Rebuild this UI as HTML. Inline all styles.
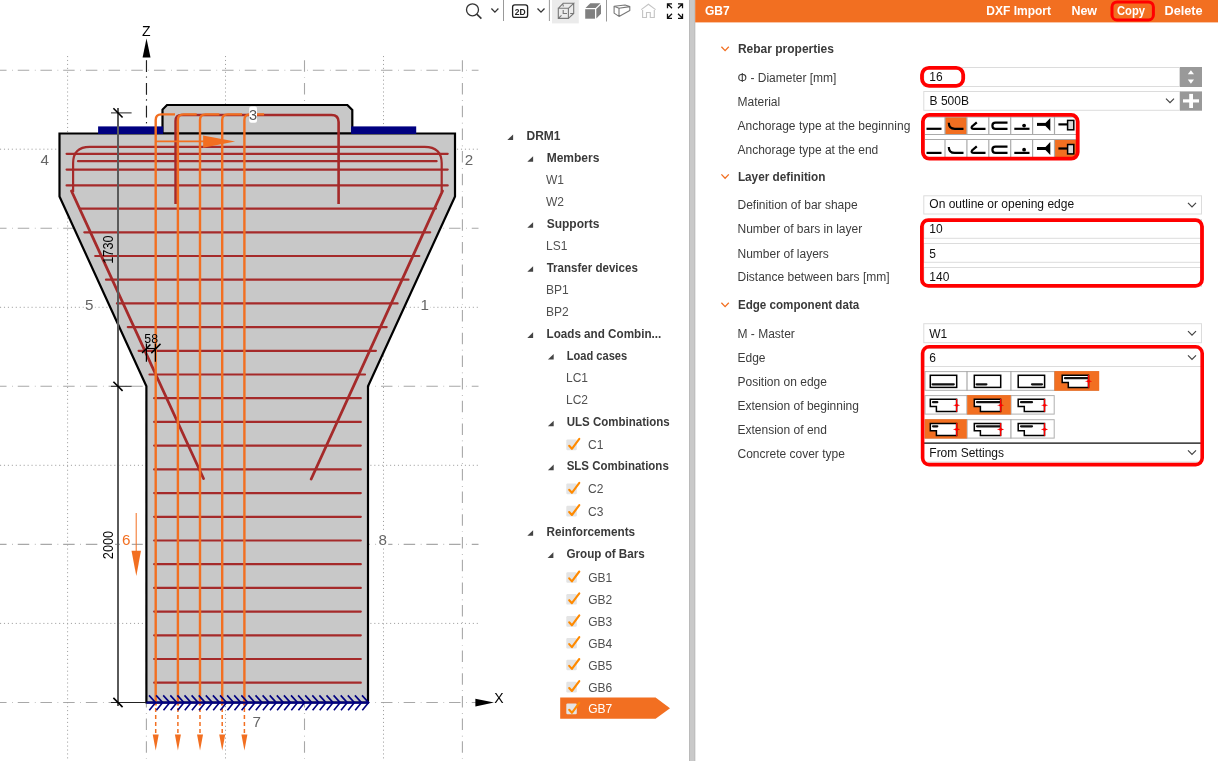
<!DOCTYPE html><html><head><meta charset="utf-8"><style>html,body{margin:0;padding:0;background:#fff;}body{width:1218px;height:761px;overflow:hidden;position:relative;}svg text{font-family:"Liberation Sans",sans-serif;}</style></head><body>
<svg width="1218" height="761" viewBox="0 0 1218 761" style="position:absolute;left:0;top:0;will-change:transform">
<rect x="0" y="0" width="1218" height="761" fill="#fff"/>
<line x1="0" y1="70.2" x2="478.5" y2="70.2" stroke="#a8a8a8" stroke-width="1.1" stroke-dasharray="11.5,5.6,0.7,4.9" stroke-dashoffset="4.95"/><line x1="0" y1="228.3" x2="478.5" y2="228.3" stroke="#a8a8a8" stroke-width="1.1" stroke-dasharray="11.5,5.6,0.7,4.9" stroke-dashoffset="4.95"/><line x1="0" y1="386.3" x2="478.5" y2="386.3" stroke="#a8a8a8" stroke-width="1.1" stroke-dasharray="11.5,5.6,0.7,4.9" stroke-dashoffset="4.95"/><line x1="0" y1="544.4" x2="478.5" y2="544.4" stroke="#a8a8a8" stroke-width="1.1" stroke-dasharray="11.5,5.6,0.7,4.9" stroke-dashoffset="4.95"/><line x1="0" y1="702.5" x2="478.5" y2="702.5" stroke="#a8a8a8" stroke-width="1.1" stroke-dasharray="11.5,5.6,0.7,4.9" stroke-dashoffset="4.95"/><line x1="0" y1="149.2" x2="478.5" y2="149.2" stroke="#a0a0a0" stroke-width="1" stroke-dasharray="1.1,2.84"/><line x1="0" y1="307.3" x2="478.5" y2="307.3" stroke="#a0a0a0" stroke-width="1" stroke-dasharray="1.1,2.84"/><line x1="0" y1="465.3" x2="478.5" y2="465.3" stroke="#a0a0a0" stroke-width="1" stroke-dasharray="1.1,2.84"/><line x1="0" y1="623.4" x2="478.5" y2="623.4" stroke="#a0a0a0" stroke-width="1" stroke-dasharray="1.1,2.84"/><line x1="146.4" y1="56" x2="146.4" y2="761" stroke="#a8a8a8" stroke-width="1.1" stroke-dasharray="11.5,5.6,0.7,4.9" stroke-dashoffset="18.4"/><line x1="304.5" y1="56" x2="304.5" y2="761" stroke="#a8a8a8" stroke-width="1.1" stroke-dasharray="11.5,5.6,0.7,4.9" stroke-dashoffset="18.4"/><line x1="462.4" y1="56" x2="462.4" y2="761" stroke="#a8a8a8" stroke-width="1.1" stroke-dasharray="11.5,5.6,0.7,4.9" stroke-dashoffset="18.4"/><line x1="67.6" y1="56" x2="67.6" y2="761" stroke="#a0a0a0" stroke-width="1" stroke-dasharray="1.1,2.84"/><line x1="225.5" y1="56" x2="225.5" y2="761" stroke="#a0a0a0" stroke-width="1" stroke-dasharray="1.1,2.84"/><line x1="383.5" y1="56" x2="383.5" y2="761" stroke="#a0a0a0" stroke-width="1" stroke-dasharray="1.1,2.84"/>
<polygon points="162.5,133.5 162.5,109.6 167,105 347.4,105 352.3,110 352.3,133.5" fill="#c8c8c8" stroke="#000" stroke-width="2.2" stroke-linejoin="miter"/>
<polygon points="59.5,133.5 455,133.5 455,196.5 368,386.3 368,702.5 146.4,702.5 146.4,386.3 59.5,196.5" fill="#c8c8c8" stroke="#000" stroke-width="2.2" stroke-linejoin="miter"/>
<rect x="98.1" y="126.4" width="65" height="7.6" fill="#000080"/>
<rect x="351.1" y="126.4" width="65.1" height="7.6" fill="#000080"/>
<line x1="66.6" y1="153.8" x2="447.7" y2="153.8" stroke="#a52a2a" stroke-width="2.2" stroke-linecap="round"/><line x1="78.0" y1="161.2" x2="436.6" y2="161.2" stroke="#a52a2a" stroke-width="2.2" stroke-linecap="round"/><line x1="66.6" y1="169.6" x2="447.7" y2="169.6" stroke="#a52a2a" stroke-width="2.2" stroke-linecap="round"/><line x1="66.6" y1="185.4" x2="447.7" y2="185.4" stroke="#a52a2a" stroke-width="2.2" stroke-linecap="round"/><line x1="80.8" y1="208.6" x2="436.0" y2="208.6" stroke="#a52a2a" stroke-width="2.2" stroke-linecap="round"/><line x1="84.3" y1="232.3" x2="430.2" y2="232.3" stroke="#a52a2a" stroke-width="2.2" stroke-linecap="round"/><line x1="95.2" y1="256.0" x2="419.3" y2="256.0" stroke="#a52a2a" stroke-width="2.2" stroke-linecap="round"/><line x1="106.0" y1="279.7" x2="408.5" y2="279.7" stroke="#a52a2a" stroke-width="2.2" stroke-linecap="round"/><line x1="116.9" y1="303.4" x2="397.6" y2="303.4" stroke="#a52a2a" stroke-width="2.2" stroke-linecap="round"/><line x1="127.8" y1="327.1" x2="386.7" y2="327.1" stroke="#a52a2a" stroke-width="2.2" stroke-linecap="round"/><line x1="138.6" y1="350.8" x2="375.9" y2="350.8" stroke="#a52a2a" stroke-width="2.2" stroke-linecap="round"/><line x1="149.5" y1="374.5" x2="365.0" y2="374.5" stroke="#a52a2a" stroke-width="2.2" stroke-linecap="round"/><line x1="154.2" y1="398.2" x2="360.8" y2="398.2" stroke="#a52a2a" stroke-width="2.2" stroke-linecap="round"/><line x1="154.2" y1="421.9" x2="360.8" y2="421.9" stroke="#a52a2a" stroke-width="2.2" stroke-linecap="round"/><line x1="154.2" y1="445.6" x2="360.8" y2="445.6" stroke="#a52a2a" stroke-width="2.2" stroke-linecap="round"/><line x1="154.2" y1="469.4" x2="360.8" y2="469.4" stroke="#a52a2a" stroke-width="2.2" stroke-linecap="round"/><line x1="154.2" y1="493.1" x2="360.8" y2="493.1" stroke="#a52a2a" stroke-width="2.2" stroke-linecap="round"/><line x1="154.2" y1="516.8" x2="360.8" y2="516.8" stroke="#a52a2a" stroke-width="2.2" stroke-linecap="round"/><line x1="154.2" y1="540.5" x2="360.8" y2="540.5" stroke="#a52a2a" stroke-width="2.2" stroke-linecap="round"/><line x1="154.2" y1="564.2" x2="360.8" y2="564.2" stroke="#a52a2a" stroke-width="2.2" stroke-linecap="round"/><line x1="154.2" y1="587.9" x2="360.8" y2="587.9" stroke="#a52a2a" stroke-width="2.2" stroke-linecap="round"/><line x1="154.2" y1="611.6" x2="360.8" y2="611.6" stroke="#a52a2a" stroke-width="2.2" stroke-linecap="round"/><line x1="154.2" y1="635.3" x2="360.8" y2="635.3" stroke="#a52a2a" stroke-width="2.2" stroke-linecap="round"/><line x1="154.2" y1="659.0" x2="360.8" y2="659.0" stroke="#a52a2a" stroke-width="2.2" stroke-linecap="round"/><line x1="154.2" y1="682.7" x2="360.8" y2="682.7" stroke="#a52a2a" stroke-width="2.2" stroke-linecap="round"/><path d="M 73.1 192 L 73.1 163.3 Q 73.1 146.8 89.7 146.8 L 424.5 146.8 Q 441.7 146.8 441.7 163.3 L 441.7 192" fill="none" stroke="#a52a2a" stroke-width="2.2"/><line x1="71.5" y1="191.0" x2="203.5" y2="478.5" stroke="#a52a2a" stroke-width="2.8" stroke-linecap="round"/><line x1="442.5" y1="191.0" x2="311.2" y2="479.0" stroke="#a52a2a" stroke-width="2.8" stroke-linecap="round"/><path d="M 175.6 204 L 175.6 121 Q 175.6 115 181.6 115 L 331.5 115 Q 338.6 115 338.6 122 L 338.6 204" fill="none" stroke="#a52a2a" stroke-width="2.6"/>
<path d="M 155.7 705.5 L 155.7 120 Q 155.7 114.4 161.29999999999998 114.4 L 175 114.4" fill="none" stroke="#f26f21" stroke-width="2.4"/><line x1="155.7" y1="708" x2="155.7" y2="736" stroke="#f26f21" stroke-width="1.5" stroke-dasharray="4,3"/><polygon points="152.7,734.4 158.7,734.4 155.7,750.4" fill="#f26f21"/><path d="M 177.9 705.5 L 177.9 120 Q 177.9 114.4 183.5 114.4 L 196.7 114.4" fill="none" stroke="#f26f21" stroke-width="2.4"/><line x1="177.9" y1="708" x2="177.9" y2="736" stroke="#f26f21" stroke-width="1.5" stroke-dasharray="4,3"/><polygon points="174.9,734.4 180.9,734.4 177.9,750.4" fill="#f26f21"/><path d="M 200.0 705.5 L 200.0 120 Q 200.0 114.4 205.6 114.4 L 219.4 114.4" fill="none" stroke="#f26f21" stroke-width="2.4"/><line x1="200.0" y1="708" x2="200.0" y2="736" stroke="#f26f21" stroke-width="1.5" stroke-dasharray="4,3"/><polygon points="197.0,734.4 203.0,734.4 200.0,750.4" fill="#f26f21"/><path d="M 222.2 705.5 L 222.2 120 Q 222.2 114.4 227.79999999999998 114.4 L 242 114.4" fill="none" stroke="#f26f21" stroke-width="2.4"/><line x1="222.2" y1="708" x2="222.2" y2="736" stroke="#f26f21" stroke-width="1.5" stroke-dasharray="4,3"/><polygon points="219.2,734.4 225.2,734.4 222.2,750.4" fill="#f26f21"/><path d="M 244.4 705.5 L 244.4 120 Q 244.4 114.4 250.0 114.4 L 264.1 114.4" fill="none" stroke="#f26f21" stroke-width="2.4"/><line x1="244.4" y1="708" x2="244.4" y2="736" stroke="#f26f21" stroke-width="1.5" stroke-dasharray="4,3"/><polygon points="241.4,734.4 247.4,734.4 244.4,750.4" fill="#f26f21"/><line x1="155.7" y1="141.4" x2="204" y2="141.4" stroke="#f26f21" stroke-width="1.6"/><polygon points="203.1,135.5 235.1,141.4 203.1,147.8" fill="#f26f21"/><line x1="136.2" y1="513" x2="136.2" y2="552" stroke="#f26f21" stroke-width="1"/><polygon points="131.5,550.7 141,550.7 136.3,576" fill="#f26f21"/>
<line x1="146.4" y1="702.6" x2="368.6" y2="702.6" stroke="#000080" stroke-width="2.2"/><path d="M 362.0 695.4 L 368.6 702.6 L 362.3 710.2" fill="none" stroke="#000080" stroke-width="1.6"/><path d="M 354.9 695.4 L 361.5 702.6 L 355.2 710.2" fill="none" stroke="#000080" stroke-width="1.6"/><path d="M 347.8 695.4 L 354.4 702.6 L 348.1 710.2" fill="none" stroke="#000080" stroke-width="1.6"/><path d="M 340.7 695.4 L 347.3 702.6 L 341.0 710.2" fill="none" stroke="#000080" stroke-width="1.6"/><path d="M 333.6 695.4 L 340.2 702.6 L 333.9 710.2" fill="none" stroke="#000080" stroke-width="1.6"/><path d="M 326.5 695.4 L 333.1 702.6 L 326.8 710.2" fill="none" stroke="#000080" stroke-width="1.6"/><path d="M 319.4 695.4 L 326.0 702.6 L 319.7 710.2" fill="none" stroke="#000080" stroke-width="1.6"/><path d="M 312.3 695.4 L 318.9 702.6 L 312.6 710.2" fill="none" stroke="#000080" stroke-width="1.6"/><path d="M 305.2 695.4 L 311.8 702.6 L 305.5 710.2" fill="none" stroke="#000080" stroke-width="1.6"/><path d="M 298.1 695.4 L 304.7 702.6 L 298.4 710.2" fill="none" stroke="#000080" stroke-width="1.6"/><path d="M 291.0 695.4 L 297.6 702.6 L 291.3 710.2" fill="none" stroke="#000080" stroke-width="1.6"/><path d="M 283.9 695.4 L 290.5 702.6 L 284.2 710.2" fill="none" stroke="#000080" stroke-width="1.6"/><path d="M 276.8 695.4 L 283.4 702.6 L 277.1 710.2" fill="none" stroke="#000080" stroke-width="1.6"/><path d="M 269.7 695.4 L 276.3 702.6 L 270.0 710.2" fill="none" stroke="#000080" stroke-width="1.6"/><path d="M 262.6 695.4 L 269.2 702.6 L 262.9 710.2" fill="none" stroke="#000080" stroke-width="1.6"/><path d="M 255.5 695.4 L 262.1 702.6 L 255.8 710.2" fill="none" stroke="#000080" stroke-width="1.6"/><path d="M 248.4 695.4 L 255.0 702.6 L 248.7 710.2" fill="none" stroke="#000080" stroke-width="1.6"/><path d="M 241.3 695.4 L 247.9 702.6 L 241.6 710.2" fill="none" stroke="#000080" stroke-width="1.6"/><path d="M 234.2 695.4 L 240.8 702.6 L 234.5 710.2" fill="none" stroke="#000080" stroke-width="1.6"/><path d="M 227.1 695.4 L 233.7 702.6 L 227.4 710.2" fill="none" stroke="#000080" stroke-width="1.6"/><path d="M 220.0 695.4 L 226.6 702.6 L 220.3 710.2" fill="none" stroke="#000080" stroke-width="1.6"/><path d="M 212.9 695.4 L 219.5 702.6 L 213.2 710.2" fill="none" stroke="#000080" stroke-width="1.6"/><path d="M 205.8 695.4 L 212.4 702.6 L 206.1 710.2" fill="none" stroke="#000080" stroke-width="1.6"/><path d="M 198.7 695.4 L 205.3 702.6 L 199.0 710.2" fill="none" stroke="#000080" stroke-width="1.6"/><path d="M 191.6 695.4 L 198.2 702.6 L 191.9 710.2" fill="none" stroke="#000080" stroke-width="1.6"/><path d="M 184.5 695.4 L 191.1 702.6 L 184.8 710.2" fill="none" stroke="#000080" stroke-width="1.6"/><path d="M 177.4 695.4 L 184.0 702.6 L 177.7 710.2" fill="none" stroke="#000080" stroke-width="1.6"/><path d="M 170.3 695.4 L 176.9 702.6 L 170.6 710.2" fill="none" stroke="#000080" stroke-width="1.6"/><path d="M 163.2 695.4 L 169.8 702.6 L 163.5 710.2" fill="none" stroke="#000080" stroke-width="1.6"/><path d="M 156.1 695.4 L 162.7 702.6 L 156.4 710.2" fill="none" stroke="#000080" stroke-width="1.6"/><path d="M 149.0 695.4 L 155.6 702.6 L 149.3 710.2" fill="none" stroke="#000080" stroke-width="1.6"/>
<line x1="146.5" y1="60.2" x2="146.5" y2="126" stroke="#222" stroke-width="1.1" stroke-dasharray="11.8,4.4,1.2,5.4"/><polygon points="142.6,57.6 150.5,57.6 146.5,38.5" fill="#000"/><text x="146.3" y="36" font-size="14" text-anchor="middle" fill="#000">Z</text><polygon points="475.4,698.8 475.4,706.4 494,702.6" fill="#000"/><text x="494.2" y="702.8" font-size="14" fill="#000">X</text><line x1="118" y1="108" x2="118" y2="706" stroke="#5a5a5a" stroke-width="2"/><line x1="111" y1="112.9" x2="131.6" y2="112.9" stroke="#222" stroke-width="1"/><line x1="113.4" y1="108.30000000000001" x2="122.6" y2="117.5" stroke="#000" stroke-width="1.6"/><line x1="111" y1="386.3" x2="131.6" y2="386.3" stroke="#222" stroke-width="1"/><line x1="113.4" y1="381.7" x2="122.6" y2="390.90000000000003" stroke="#000" stroke-width="1.6"/><line x1="111" y1="702.5" x2="131.6" y2="702.5" stroke="#222" stroke-width="1"/><line x1="113.4" y1="697.9" x2="122.6" y2="707.1" stroke="#000" stroke-width="1.6"/><line x1="131" y1="702.5" x2="146" y2="702.5" stroke="#222" stroke-width="1"/><text transform="translate(113.3,249.6) rotate(-90)" font-size="14.6" text-anchor="middle" textLength="28.4" lengthAdjust="spacingAndGlyphs" fill="#000">1730</text><rect x="101.5" y="529.5" width="13.5" height="31" fill="#fff"/><text transform="translate(113.4,545) rotate(-90)" font-size="14.6" text-anchor="middle" textLength="28.4" lengthAdjust="spacingAndGlyphs" fill="#000">2000</text><text x="151.2" y="342.8" font-size="12.3" text-anchor="middle" fill="#000">58</text><line x1="146.3" y1="348.5" x2="155.4" y2="348.5" stroke="#000" stroke-width="1.1"/><line x1="146.4" y1="343.6" x2="146.4" y2="361.7" stroke="#000" stroke-width="1.2"/><line x1="155.4" y1="343.6" x2="155.4" y2="361.7" stroke="#000" stroke-width="1.2"/><line x1="142.1" y1="353.1" x2="150.4" y2="344.5" stroke="#000" stroke-width="1.5"/><line x1="151.3" y1="353.1" x2="160.5" y2="343.9" stroke="#000" stroke-width="1.5"/><rect x="39.3" y="151.7" width="11" height="15" fill="#fff"/><text x="44.8" y="164.7" font-size="15.2" text-anchor="middle" fill="#666">4</text><rect x="463.5" y="151.7" width="11" height="15" fill="#fff"/><text x="469" y="164.7" font-size="15.2" text-anchor="middle" fill="#666">2</text><rect x="83.8" y="297" width="11" height="15" fill="#fff"/><text x="89.3" y="310" font-size="15.2" text-anchor="middle" fill="#666">5</text><rect x="419.2" y="297" width="11" height="15" fill="#fff"/><text x="424.7" y="310" font-size="15.2" text-anchor="middle" fill="#666">1</text><rect x="377.2" y="532" width="11" height="15" fill="#fff"/><text x="382.7" y="545" font-size="15.2" text-anchor="middle" fill="#666">8</text><rect x="251.3" y="713.7" width="11" height="15" fill="#fff"/><text x="256.8" y="726.7" font-size="15.2" text-anchor="middle" fill="#666">7</text><rect x="120.7" y="532" width="11" height="15" fill="#fff"/><text x="126.2" y="545" font-size="15.2" text-anchor="middle" fill="#f26f21">6</text><rect x="249.2" y="106.4" width="7.8" height="16.3" rx="2" fill="#fff"/><text x="253.1" y="119.8" font-size="14.5" text-anchor="middle" fill="#555">3</text>
<polygon points="560.2,697.6 655.6,697.6 670,708.2 655.6,718.7 560.2,718.7" fill="#f26f21"/><polygon points="513.1,134.4 513.1,140.0 507.3,140.0" fill="#444"/><text x="526.5" y="140" font-size="12" font-weight="bold" fill="#3a3a3a">DRM1</text><polygon points="533.1,156.2 533.1,161.8 527.3,161.8" fill="#444"/><text x="546.7" y="161.8" font-size="12" font-weight="bold" fill="#3a3a3a">Members</text><text x="546" y="183.8" font-size="12" fill="#505050">W1</text><text x="546" y="205.8" font-size="12" fill="#505050">W2</text><polygon points="533.1,222.2 533.1,227.8 527.3,227.8" fill="#444"/><text x="546.7" y="227.8" font-size="12" font-weight="bold" fill="#3a3a3a">Supports</text><text x="546" y="249.8" font-size="12" fill="#505050">LS1</text><polygon points="533.1,266.2 533.1,271.8 527.3,271.8" fill="#444"/><text x="546.7" y="271.8" font-size="12" font-weight="bold" textLength="91.12" lengthAdjust="spacingAndGlyphs" fill="#3a3a3a">Transfer devices</text><text x="546" y="293.8" font-size="12" fill="#505050">BP1</text><text x="546" y="315.8" font-size="12" fill="#505050">BP2</text><polygon points="533.1,332.3 533.1,337.9 527.3,337.9" fill="#444"/><text x="546.5" y="337.9" font-size="12" font-weight="bold" textLength="114.82" lengthAdjust="spacingAndGlyphs" fill="#3a3a3a">Loads and Combin...</text><polygon points="553.7,354.0 553.7,359.6 547.9,359.6" fill="#444"/><text x="566.7" y="359.6" font-size="12" font-weight="bold" textLength="60.46" lengthAdjust="spacingAndGlyphs" fill="#3a3a3a">Load cases</text><text x="566" y="382" font-size="12" fill="#505050">LC1</text><text x="566" y="403.8" font-size="12" fill="#505050">LC2</text><polygon points="553.7,420.7 553.7,426.3 547.9,426.3" fill="#444"/><text x="566.7" y="426.3" font-size="12" font-weight="bold" textLength="103.04" lengthAdjust="spacingAndGlyphs" fill="#3a3a3a">ULS Combinations</text><rect x="566.3" y="439.6" width="10.5" height="10.6" rx="1.2" fill="#e4e4e4"/><path d="M 569.2 445.8 L 571.9 448.8 L 579.3 438.9" fill="none" stroke="#ff8a00" stroke-width="2.1" stroke-linecap="round" stroke-linejoin="round"/><text x="588" y="449.4" font-size="12" fill="#505050">C1</text><polygon points="553.7,464.6 553.7,470.2 547.9,470.2" fill="#444"/><text x="566.7" y="470.2" font-size="12" font-weight="bold" textLength="102.08" lengthAdjust="spacingAndGlyphs" fill="#3a3a3a">SLS Combinations</text><rect x="566.3" y="483.6" width="10.5" height="10.6" rx="1.2" fill="#e4e4e4"/><path d="M 569.2 489.8 L 571.9 492.8 L 579.3 482.9" fill="none" stroke="#ff8a00" stroke-width="2.1" stroke-linecap="round" stroke-linejoin="round"/><text x="588" y="493.4" font-size="12" fill="#505050">C2</text><rect x="566.3" y="505.8" width="10.5" height="10.6" rx="1.2" fill="#e4e4e4"/><path d="M 569.2 512.0 L 571.9 515.0 L 579.3 505.1" fill="none" stroke="#ff8a00" stroke-width="2.1" stroke-linecap="round" stroke-linejoin="round"/><text x="588" y="515.6" font-size="12" fill="#505050">C3</text><polygon points="533.1,530.2 533.1,535.8 527.3,535.8" fill="#444"/><text x="546.5" y="535.8" font-size="12" font-weight="bold" textLength="88.61" lengthAdjust="spacingAndGlyphs" fill="#3a3a3a">Reinforcements</text><polygon points="553.4,552.3 553.4,557.9 547.6,557.9" fill="#444"/><text x="566.5" y="557.9" font-size="12" font-weight="bold" textLength="78.25" lengthAdjust="spacingAndGlyphs" fill="#3a3a3a">Group of Bars</text><rect x="566.3" y="572.2" width="10.5" height="10.6" rx="1.2" fill="#e4e4e4"/><path d="M 569.2 578.4 L 571.9 581.4 L 579.3 571.5" fill="none" stroke="#ff8a00" stroke-width="2.1" stroke-linecap="round" stroke-linejoin="round"/><text x="588.2" y="582" font-size="12" fill="#505050">GB1</text><rect x="566.3" y="594.0" width="10.5" height="10.6" rx="1.2" fill="#e4e4e4"/><path d="M 569.2 600.2 L 571.9 603.2 L 579.3 593.3" fill="none" stroke="#ff8a00" stroke-width="2.1" stroke-linecap="round" stroke-linejoin="round"/><text x="588.2" y="603.8" font-size="12" fill="#505050">GB2</text><rect x="566.3" y="616.1" width="10.5" height="10.6" rx="1.2" fill="#e4e4e4"/><path d="M 569.2 622.3 L 571.9 625.3 L 579.3 615.4" fill="none" stroke="#ff8a00" stroke-width="2.1" stroke-linecap="round" stroke-linejoin="round"/><text x="588.2" y="625.9" font-size="12" fill="#505050">GB3</text><rect x="566.3" y="637.9" width="10.5" height="10.6" rx="1.2" fill="#e4e4e4"/><path d="M 569.2 644.1 L 571.9 647.1 L 579.3 637.2" fill="none" stroke="#ff8a00" stroke-width="2.1" stroke-linecap="round" stroke-linejoin="round"/><text x="588.2" y="647.7" font-size="12" fill="#505050">GB4</text><rect x="566.3" y="659.7" width="10.5" height="10.6" rx="1.2" fill="#e4e4e4"/><path d="M 569.2 665.9 L 571.9 668.9 L 579.3 659.0" fill="none" stroke="#ff8a00" stroke-width="2.1" stroke-linecap="round" stroke-linejoin="round"/><text x="588.2" y="669.5" font-size="12" fill="#505050">GB5</text><rect x="566.3" y="681.8" width="10.5" height="10.6" rx="1.2" fill="#e4e4e4"/><path d="M 569.2 688.0 L 571.9 691.0 L 579.3 681.1" fill="none" stroke="#ff8a00" stroke-width="2.1" stroke-linecap="round" stroke-linejoin="round"/><text x="588.2" y="691.6" font-size="12" fill="#505050">GB6</text><rect x="566.3" y="703.6" width="10.5" height="10.6" rx="1.2" fill="#e4e4e4"/><path d="M 569.2 709.8 L 571.9 712.8 L 579.3 702.9" fill="none" stroke="#ff8a00" stroke-width="2.1" stroke-linecap="round" stroke-linejoin="round"/><text x="588.2" y="713.4" font-size="12" fill="#fff">GB7</text>
<circle cx="472.5" cy="9.8" r="6" fill="none" stroke="#333" stroke-width="1.3"/><line x1="476.8" y1="14.2" x2="481.4" y2="18.6" stroke="#333" stroke-width="1.6"/><path d="M 491.4 8.5 L 494.9 12.1 L 498.4 8.5" fill="none" stroke="#333" stroke-width="1.3"/><line x1="503.5" y1="0" x2="503.5" y2="21" stroke="#999" stroke-width="1"/><rect x="512.6" y="4.9" width="15" height="12.5" rx="2.2" fill="none" stroke="#222" stroke-width="1.3"/><text x="520.1" y="14.6" font-size="8.5" font-weight="bold" text-anchor="middle" fill="#222">2D</text><path d="M 537.5 8.5 L 541.0 12.1 L 544.5 8.5" fill="none" stroke="#333" stroke-width="1.3"/><line x1="549.4" y1="0" x2="549.4" y2="21" stroke="#999" stroke-width="1"/><rect x="552" y="0" width="26.8" height="23.4" fill="#ebebeb"/><path d="M 558.3 8.3 L 568.4 8.3 L 568.4 18.4 L 558.3 18.4 Z M 558.3 8.3 L 563.2 3.3 L 573.7 3.3 L 568.4 8.3 M 573.7 3.3 L 573.7 13.5 L 568.4 18.4 M 558.3 18.4 L 561.5 15.3 M 563.2 4.5 L 563.2 6.5 M 563.2 10 L 563.2 13.5 L 567 13.5 M 570.2 13.5 L 573.7 13.5" fill="none" stroke="#777" stroke-width="1.1"/><path d="M 585.2 9.2 L 595 9.2 L 595 18.7 L 585.2 18.7 Z" fill="#808080"/><path d="M 585.5 8 L 590.3 3.3 L 600.5 3.3 L 595.6 8 Z" fill="#808080"/><path d="M 596.3 9 L 601 4.5 L 601 13.7 L 596.3 18.5 Z" fill="#808080"/><line x1="606.5" y1="0" x2="606.5" y2="21.5" stroke="#999" stroke-width="1"/><path d="M 614.1 6.3 L 625 5 L 629.8 6.6 L 629.8 10.5 L 619 16.4 L 614.1 13.1 Z M 614.1 6.3 L 619 8.2 L 629.8 6.6 M 619 8.2 L 619 16.4" fill="none" stroke="#777" stroke-width="1.1" stroke-linejoin="round"/><path d="M 641.2 9.6 L 648.4 4.3 L 655.6 9.6 M 642.6 10 L 642.6 17.5 L 646.5 17.5 L 646.5 12.5 L 650.3 12.5 L 650.3 17.5 L 654.3 17.5 L 654.3 10" fill="none" stroke="#c4c4c4" stroke-width="1.1"/><path d="M 672.0 3.8 L 667.5 3.8 L 667.5 8.3 M 667.5 3.8 L 672.0 8.3" fill="none" stroke="#111" stroke-width="1.3"/><path d="M 678.0 3.8 L 682.5 3.8 L 682.5 8.3 M 682.5 3.8 L 678.0 8.3" fill="none" stroke="#111" stroke-width="1.3"/><path d="M 672.0 18.3 L 667.5 18.3 L 667.5 13.8 M 667.5 18.3 L 672.0 13.8" fill="none" stroke="#111" stroke-width="1.3"/><path d="M 678.0 18.3 L 682.5 18.3 L 682.5 13.8 M 682.5 18.3 L 678.0 13.8" fill="none" stroke="#111" stroke-width="1.3"/>
<rect x="689.1" y="0" width="6.1" height="761" fill="#c9c9c9"/>
<rect x="689.1" y="0" width="0.8" height="761" fill="#b5b5b5"/><rect x="694.4" y="0" width="0.8" height="761" fill="#b8b8b8"/>
<rect x="695.2" y="0" width="523" height="22.4" fill="#f26f21"/><text x="705" y="15.2" font-size="12" font-weight="bold" textLength="24.67" lengthAdjust="spacingAndGlyphs" fill="#fff">GB7</text><text x="986.3" y="15.2" font-size="12" font-weight="bold" textLength="64.66" lengthAdjust="spacingAndGlyphs" fill="#fff">DXF Import</text><text x="1071.4" y="15.2" font-size="12" font-weight="bold" textLength="25.66" lengthAdjust="spacingAndGlyphs" fill="#fff">New</text><text x="1117" y="15.2" font-size="12" font-weight="bold" textLength="28.05" lengthAdjust="spacingAndGlyphs" fill="#fff">Copy</text><text x="1164.5" y="15.2" font-size="12" font-weight="bold" textLength="38.18" lengthAdjust="spacingAndGlyphs" fill="#fff">Delete</text><rect x="1112" y="1.9" width="41.4" height="18" rx="5" fill="none" stroke="#ff0000" stroke-width="3"/><path d="M 721.4 46.8 L 725.1 50.6 L 728.8 46.8" fill="none" stroke="#f26f21" stroke-width="1.3"/><text x="737.9" y="52.9" font-size="12" font-weight="bold" textLength="96.03" lengthAdjust="spacingAndGlyphs" fill="#3a3a3a">Rebar properties</text><text x="737.5" y="81.8" font-size="12" fill="#3c3c3c">&#934; - Diameter [mm]</text><text x="737.5" y="105.9" font-size="12" fill="#3c3c3c">Material</text><text x="737.5" y="129.9" font-size="12" fill="#3c3c3c">Anchorage type at the beginning</text><text x="737.5" y="153.8" font-size="12" fill="#3c3c3c">Anchorage type at the end</text><path d="M 721.4 174.4 L 725.1 178.2 L 728.8 174.4" fill="none" stroke="#f26f21" stroke-width="1.3"/><text x="737.9" y="180.5" font-size="12" font-weight="bold" textLength="87.56" lengthAdjust="spacingAndGlyphs" fill="#3a3a3a">Layer definition</text><text x="737.5" y="209.3" font-size="12" fill="#3c3c3c">Definition of bar shape</text><text x="737.5" y="233.3" font-size="12" fill="#3c3c3c">Number of bars in layer</text><text x="737.5" y="257.5" font-size="12" fill="#3c3c3c">Number of layers</text><text x="737.5" y="281.4" font-size="12" fill="#3c3c3c">Distance between bars [mm]</text><path d="M 721.4 302.8 L 725.1 306.6 L 728.8 302.8" fill="none" stroke="#f26f21" stroke-width="1.3"/><text x="737.9" y="308.9" font-size="12" font-weight="bold" textLength="121.33" lengthAdjust="spacingAndGlyphs" fill="#3a3a3a">Edge component data</text><text x="737.5" y="338" font-size="12" fill="#3c3c3c">M - Master</text><text x="737.5" y="362.1" font-size="12" fill="#3c3c3c">Edge</text><text x="737.5" y="386" font-size="12" fill="#3c3c3c">Position on edge</text><text x="737.5" y="410.2" font-size="12" fill="#3c3c3c">Extension of beginning</text><text x="737.5" y="434.1" font-size="12" fill="#3c3c3c">Extension of end</text><text x="737.5" y="458.3" font-size="12" fill="#3c3c3c">Concrete cover type</text><rect x="923.8" y="67.5" width="255.70000000000005" height="19" fill="#fff" stroke="#dcdcdc" stroke-width="1"/><text x="929.3" y="81.4" font-size="12" fill="#111">16</text><rect x="1180" y="67" width="22" height="20" fill="#999"/><polygon points="1187.8,74.3 1194,74.3 1190.9,70.2" fill="#fff"/><polygon points="1187.8,79.6 1194,79.6 1190.9,83.7" fill="#fff"/><rect x="922" y="67.8" width="41.2" height="18" rx="7" fill="none" stroke="#ff0000" stroke-width="3.8"/><rect x="923.8" y="91.5" width="256" height="18.8" fill="#fff" stroke="#dcdcdc" stroke-width="1"/><text x="929.6" y="104.7" font-size="12" fill="#111">B 500B</text><path d="M 1166 98.6 L 1170 102.6 L 1174 98.6" fill="none" stroke="#444" stroke-width="1.2"/><rect x="1180" y="91.4" width="22" height="19.3" fill="#999"/><rect x="1183" y="99.3" width="16" height="3.2" fill="#fff"/><rect x="1189.2" y="93.9" width="3.8" height="14.1" fill="#fff"/><rect x="925" y="116.5" width="151" height="18.5" fill="#fff"/><rect x="945.0" y="116.5" width="21.9" height="18.5" fill="#f26f21"/><line x1="925" y1="117.0" x2="1076" y2="117.0" stroke="#aaa" stroke-width="1"/><line x1="925" y1="134.5" x2="1076" y2="134.5" stroke="#aaa" stroke-width="1"/><line x1="945.0" y1="116.5" x2="945.0" y2="135" stroke="#aaa" stroke-width="1.2"/><line x1="966.9" y1="116.5" x2="966.9" y2="135" stroke="#aaa" stroke-width="1.2"/><line x1="988.8" y1="116.5" x2="988.8" y2="135" stroke="#aaa" stroke-width="1.2"/><line x1="1010.7" y1="116.5" x2="1010.7" y2="135" stroke="#aaa" stroke-width="1.2"/><line x1="1032.6" y1="116.5" x2="1032.6" y2="135" stroke="#aaa" stroke-width="1.2"/><line x1="1054.5" y1="116.5" x2="1054.5" y2="135" stroke="#aaa" stroke-width="1.2"/><line x1="926.5" y1="128.8" x2="941.5" y2="128.8" stroke="#000" stroke-width="2.2"/><path d="M 948.8 122.80000000000001 Q 948.8 128.8 954.8 128.8 L 963.5 128.8" fill="none" stroke="#000" stroke-width="2.2"/><path d="M 976.8 122.30000000000001 L 972 126.4 Q 970.6 128.8 974 128.8 L 985.5 128.8" fill="none" stroke="#000" stroke-width="2.2"/><path d="M 1007.5 122.60000000000001 L 995.5 122.60000000000001 Q 992.4 122.60000000000001 992.4 125.70000000000002 Q 992.4 128.8 995.5 128.8 L 1007.5 128.8" fill="none" stroke="#000" stroke-width="2.2"/><line x1="1014.3" y1="128.8" x2="1029.5" y2="128.8" stroke="#000" stroke-width="2.2"/><circle cx="1024.1" cy="125.60000000000001" r="1.9" fill="#000"/><line x1="1037" y1="124.4" x2="1047" y2="124.4" stroke="#000" stroke-width="3"/><polygon points="1045.5,122.9 1050.3,118.0 1050.3,131.0 1045.5,125.9" fill="#000"/><line x1="1058.4" y1="124.4" x2="1067.3" y2="124.4" stroke="#000" stroke-width="2.2"/><rect x="1067.6" y="120.4" width="6.2" height="9.4" fill="#d9d9d9" stroke="#000" stroke-width="1.5"/><rect x="925" y="139" width="151" height="19" fill="#fff"/><rect x="1054.5" y="139" width="22.0" height="19" fill="#f26f21"/><line x1="925" y1="139.5" x2="1076" y2="139.5" stroke="#aaa" stroke-width="1"/><line x1="925" y1="157.5" x2="1076" y2="157.5" stroke="#aaa" stroke-width="1"/><line x1="945.0" y1="139" x2="945.0" y2="158" stroke="#aaa" stroke-width="1.2"/><line x1="966.9" y1="139" x2="966.9" y2="158" stroke="#aaa" stroke-width="1.2"/><line x1="988.8" y1="139" x2="988.8" y2="158" stroke="#aaa" stroke-width="1.2"/><line x1="1010.7" y1="139" x2="1010.7" y2="158" stroke="#aaa" stroke-width="1.2"/><line x1="1032.6" y1="139" x2="1032.6" y2="158" stroke="#aaa" stroke-width="1.2"/><line x1="1054.5" y1="139" x2="1054.5" y2="158" stroke="#aaa" stroke-width="1.2"/><line x1="926.5" y1="152.9" x2="941.5" y2="152.9" stroke="#000" stroke-width="2.2"/><path d="M 948.8 146.9 Q 948.8 152.9 954.8 152.9 L 963.5 152.9" fill="none" stroke="#000" stroke-width="2.2"/><path d="M 976.8 146.4 L 972 150.5 Q 970.6 152.9 974 152.9 L 985.5 152.9" fill="none" stroke="#000" stroke-width="2.2"/><path d="M 1007.5 146.70000000000002 L 995.5 146.70000000000002 Q 992.4 146.70000000000002 992.4 149.8 Q 992.4 152.9 995.5 152.9 L 1007.5 152.9" fill="none" stroke="#000" stroke-width="2.2"/><line x1="1014.3" y1="152.9" x2="1029.5" y2="152.9" stroke="#000" stroke-width="2.2"/><circle cx="1024.1" cy="149.70000000000002" r="1.9" fill="#000"/><line x1="1037" y1="148.5" x2="1047" y2="148.5" stroke="#000" stroke-width="3"/><polygon points="1045.5,147.0 1050.3,142.1 1050.3,155.1 1045.5,150.0" fill="#000"/><line x1="1058.4" y1="148.5" x2="1067.3" y2="148.5" stroke="#000" stroke-width="2.2"/><rect x="1067.6" y="144.5" width="6.2" height="9.4" fill="#d9d9d9" stroke="#000" stroke-width="1.5"/><rect x="922.9" y="114.9" width="154.8" height="43.8" rx="6.5" fill="none" stroke="#ff0000" stroke-width="3.8"/><rect x="923.8" y="195.8" width="277.70000000000005" height="18.19999999999999" fill="#fff" stroke="#dcdcdc" stroke-width="1"/><text x="929.3" y="208.4" font-size="12" fill="#111">On outline or opening edge</text><path d="M 1188.0 202.8 L 1192.0 206.8 L 1196.0 202.8" fill="none" stroke="#444" stroke-width="1.2"/><rect x="923.8" y="219.5" width="277.70000000000005" height="18.80000000000001" fill="#fff" stroke="#dcdcdc" stroke-width="1"/><text x="929.3" y="233.3" font-size="12" fill="#111">10</text><rect x="923.8" y="243.5" width="277.70000000000005" height="18.80000000000001" fill="#fff" stroke="#dcdcdc" stroke-width="1"/><text x="929.3" y="257.6" font-size="12" fill="#111">5</text><rect x="923.8" y="267.5" width="277.70000000000005" height="18.80000000000001" fill="#fff" stroke="#dcdcdc" stroke-width="1"/><text x="929.3" y="281.3" font-size="12" fill="#111">140</text><rect x="921.9" y="220.1" width="280.1" height="65.8" rx="6.5" fill="none" stroke="#ff0000" stroke-width="3.8"/><rect x="923.8" y="323.7" width="277.70000000000005" height="19.0" fill="#fff" stroke="#dcdcdc" stroke-width="1"/><text x="929.3" y="337.6" font-size="12" fill="#111">W1</text><path d="M 1188.0 331.1 L 1192.0 335.1 L 1196.0 331.1" fill="none" stroke="#444" stroke-width="1.2"/><rect x="923.8" y="348.5" width="277.70000000000005" height="18" fill="#fff" stroke="#dcdcdc" stroke-width="1"/><text x="929.3" y="361.6" font-size="12" fill="#111">6</text><path d="M 1188.0 355.4 L 1192.0 359.4 L 1196.0 355.4" fill="none" stroke="#444" stroke-width="1.2"/><rect x="925" y="371.1" width="174" height="19.69999999999999" fill="#fff"/><rect x="925" y="371.6" width="173.4000000000001" height="18.69999999999999" fill="#fff" stroke="#b0b0b0" stroke-width="1"/><line x1="967.0" y1="371.1" x2="967.0" y2="390.8" stroke="#a8a8a8" stroke-width="1.2"/><line x1="1010.9" y1="371.1" x2="1010.9" y2="390.8" stroke="#a8a8a8" stroke-width="1.2"/><line x1="1054.7" y1="371.1" x2="1054.7" y2="390.8" stroke="#a8a8a8" stroke-width="1.2"/><rect x="1054.4" y="371.1" width="44.80000000000005" height="19.69999999999999" fill="#f26f21"/><rect x="930.3" y="375.3" width="26.4" height="12.1" fill="#fff" stroke="#000" stroke-width="1.5"/><line x1="932.6" y1="384.3" x2="953.8" y2="384.3" stroke="#111" stroke-width="2.2" stroke-linecap="round"/><rect x="974.3" y="375.3" width="26.4" height="12.1" fill="#fff" stroke="#000" stroke-width="1.5"/><line x1="976.6" y1="384.3" x2="986.4" y2="384.3" stroke="#111" stroke-width="2.2" stroke-linecap="round"/><rect x="1018.2" y="375.3" width="26.4" height="12.1" fill="#fff" stroke="#000" stroke-width="1.5"/><line x1="1032" y1="384.3" x2="1042" y2="384.3" stroke="#111" stroke-width="2.2" stroke-linecap="round"/><path d="M 1062.2 375.3 L 1088.5 375.3 L 1088.5 387.40000000000003 L 1068.3 387.40000000000003 L 1068.3 382.6 L 1062.2 382.6 Z" fill="#fff" stroke="#000" stroke-width="1.5"/><line x1="1065" y1="378.2" x2="1087.5" y2="378.2" stroke="#111" stroke-width="2.2" stroke-linecap="round"/><line x1="1088.5" y1="375.0" x2="1088.5" y2="387.8" stroke="#ff0000" stroke-width="1.3"/><path d="M 1084.7 381.3 Q 1088.1 380.90000000000003 1088.5 378.90000000000003 Q 1088.9 380.90000000000003 1092.1 381.3 Q 1088.9 381.7 1088.5 383.90000000000003 Q 1088.1 381.7 1084.7 381.3 Z" fill="#ff0000"/><rect x="925" y="395.6" width="129.20000000000005" height="18.5" fill="#fff" stroke="#b0b0b0" stroke-width="1"/><line x1="967.0" y1="395.1" x2="967.0" y2="414.6" stroke="#a8a8a8" stroke-width="1.2"/><line x1="1010.9" y1="395.1" x2="1010.9" y2="414.6" stroke="#a8a8a8" stroke-width="1.2"/><rect x="967.2" y="395.1" width="43.6" height="19.5" fill="#f26f21"/><path d="M 930.3 399.3 L 956.5999999999999 399.3 L 956.5999999999999 411.40000000000003 L 936.4 411.40000000000003 L 936.4 406.6 L 930.3 406.6 Z" fill="#fff" stroke="#000" stroke-width="1.5"/><line x1="933" y1="402.2" x2="937.3" y2="402.2" stroke="#111" stroke-width="2.2" stroke-linecap="round"/><line x1="956.5999999999999" y1="399.0" x2="956.5999999999999" y2="411.8" stroke="#ff0000" stroke-width="1.3"/><path d="M 952.8 405.3 Q 956.1999999999999 404.90000000000003 956.5999999999999 402.90000000000003 Q 956.9999999999999 404.90000000000003 960.1999999999999 405.3 Q 956.9999999999999 405.7 956.5999999999999 407.90000000000003 Q 956.1999999999999 405.7 952.8 405.3 Z" fill="#ff0000"/><path d="M 974.3 399.3 L 1000.5999999999999 399.3 L 1000.5999999999999 411.40000000000003 L 980.4 411.40000000000003 L 980.4 406.6 L 974.3 406.6 Z" fill="#fff" stroke="#000" stroke-width="1.5"/><line x1="977" y1="402.2" x2="999.8" y2="402.2" stroke="#111" stroke-width="2.2" stroke-linecap="round"/><line x1="1000.5999999999999" y1="399.0" x2="1000.5999999999999" y2="411.8" stroke="#ff0000" stroke-width="1.3"/><path d="M 996.8 405.3 Q 1000.1999999999999 404.90000000000003 1000.5999999999999 402.90000000000003 Q 1000.9999999999999 404.90000000000003 1004.1999999999999 405.3 Q 1000.9999999999999 405.7 1000.5999999999999 407.90000000000003 Q 1000.1999999999999 405.7 996.8 405.3 Z" fill="#ff0000"/><path d="M 1018.2 399.3 L 1044.5 399.3 L 1044.5 411.40000000000003 L 1024.3 411.40000000000003 L 1024.3 406.6 L 1018.2 406.6 Z" fill="#fff" stroke="#000" stroke-width="1.5"/><line x1="1021" y1="402.2" x2="1032" y2="402.2" stroke="#111" stroke-width="2.2" stroke-linecap="round"/><line x1="1044.5" y1="399.0" x2="1044.5" y2="411.8" stroke="#ff0000" stroke-width="1.3"/><path d="M 1040.7 405.3 Q 1044.1 404.90000000000003 1044.5 402.90000000000003 Q 1044.9 404.90000000000003 1048.1 405.3 Q 1044.9 405.7 1044.5 407.90000000000003 Q 1044.1 405.7 1040.7 405.3 Z" fill="#ff0000"/><rect x="925" y="419.7" width="129.20000000000005" height="18.400000000000034" fill="#fff" stroke="#b0b0b0" stroke-width="1"/><line x1="967.0" y1="419.2" x2="967.0" y2="438.6" stroke="#a8a8a8" stroke-width="1.2"/><line x1="1010.9" y1="419.2" x2="1010.9" y2="438.6" stroke="#a8a8a8" stroke-width="1.2"/><rect x="924.7" y="419.2" width="42.1" height="19.400000000000034" fill="#f26f21"/><path d="M 930.3 423.4 L 956.5999999999999 423.4 L 956.5999999999999 435.5 L 936.4 435.5 L 936.4 430.7 L 930.3 430.7 Z" fill="#fff" stroke="#000" stroke-width="1.5"/><line x1="933" y1="426.29999999999995" x2="937.3" y2="426.29999999999995" stroke="#111" stroke-width="2.2" stroke-linecap="round"/><line x1="956.5999999999999" y1="423.09999999999997" x2="956.5999999999999" y2="435.9" stroke="#ff0000" stroke-width="1.3"/><path d="M 952.8 429.4 Q 956.1999999999999 429.0 956.5999999999999 427.0 Q 956.9999999999999 429.0 960.1999999999999 429.4 Q 956.9999999999999 429.79999999999995 956.5999999999999 432.0 Q 956.1999999999999 429.79999999999995 952.8 429.4 Z" fill="#ff0000"/><path d="M 974.3 423.4 L 1000.5999999999999 423.4 L 1000.5999999999999 435.5 L 980.4 435.5 L 980.4 430.7 L 974.3 430.7 Z" fill="#fff" stroke="#000" stroke-width="1.5"/><line x1="977" y1="426.29999999999995" x2="999.8" y2="426.29999999999995" stroke="#111" stroke-width="2.2" stroke-linecap="round"/><line x1="1000.5999999999999" y1="423.09999999999997" x2="1000.5999999999999" y2="435.9" stroke="#ff0000" stroke-width="1.3"/><path d="M 996.8 429.4 Q 1000.1999999999999 429.0 1000.5999999999999 427.0 Q 1000.9999999999999 429.0 1004.1999999999999 429.4 Q 1000.9999999999999 429.79999999999995 1000.5999999999999 432.0 Q 1000.1999999999999 429.79999999999995 996.8 429.4 Z" fill="#ff0000"/><path d="M 1018.2 423.4 L 1044.5 423.4 L 1044.5 435.5 L 1024.3 435.5 L 1024.3 430.7 L 1018.2 430.7 Z" fill="#fff" stroke="#000" stroke-width="1.5"/><line x1="1021" y1="426.29999999999995" x2="1032" y2="426.29999999999995" stroke="#111" stroke-width="2.2" stroke-linecap="round"/><line x1="1044.5" y1="423.09999999999997" x2="1044.5" y2="435.9" stroke="#ff0000" stroke-width="1.3"/><path d="M 1040.7 429.4 Q 1044.1 429.0 1044.5 427.0 Q 1044.9 429.0 1048.1 429.4 Q 1044.9 429.79999999999995 1044.5 432.0 Q 1044.1 429.79999999999995 1040.7 429.4 Z" fill="#ff0000"/><rect x="923.8" y="443.0" width="277.70000000000005" height="19.0" fill="#fff" stroke="#dcdcdc" stroke-width="1"/><text x="929.3" y="457.3" font-size="12" fill="#111">From Settings</text><path d="M 1188.0 450.4 L 1192.0 454.4 L 1196.0 450.4" fill="none" stroke="#444" stroke-width="1.2"/><line x1="923" y1="443.2" x2="1202" y2="443.2" stroke="#111" stroke-width="1.3"/><rect x="922.6" y="346.8" width="279.6" height="117.8" rx="6.5" fill="none" stroke="#ff0000" stroke-width="3.6"/>
</svg>
</body></html>
